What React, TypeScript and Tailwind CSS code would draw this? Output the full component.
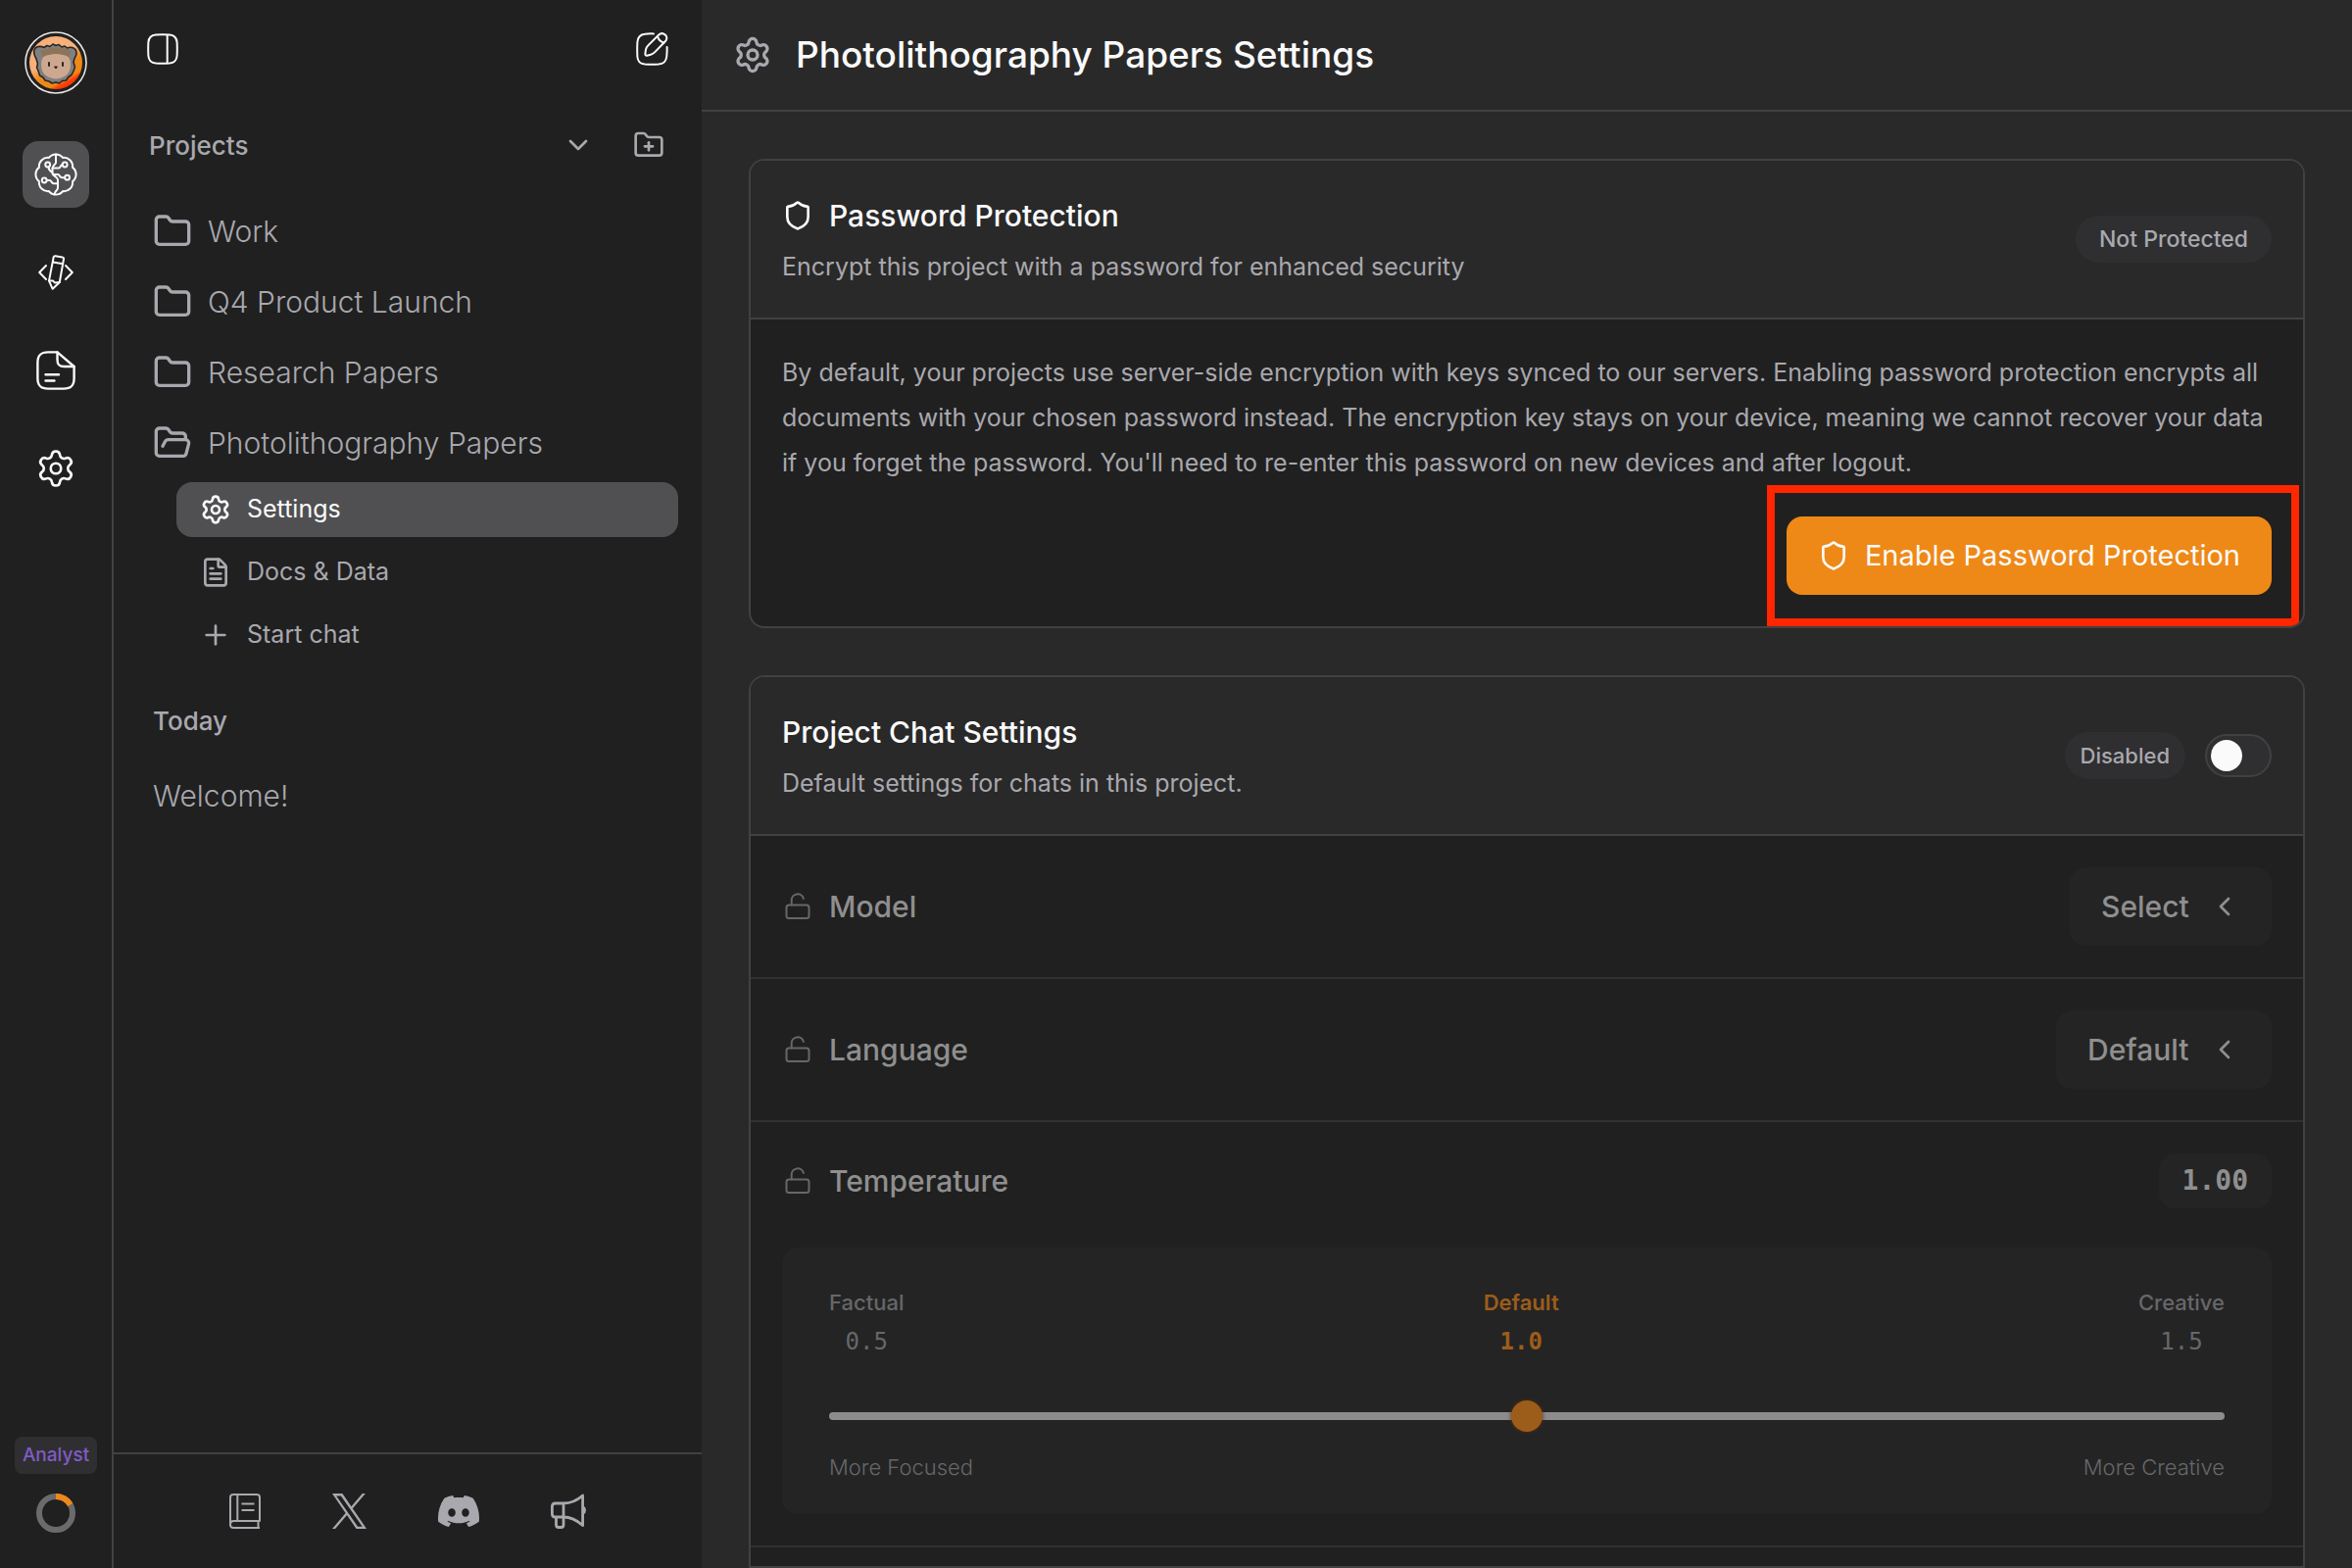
import React from "react";
import {
  ChevronDown,
  ChevronLeft,
  FileText,
  Folder,
  FolderOpen,
  FolderPlus,
  Plus,
  Settings,
  Shield,
} from "lucide-react";
import { SiDiscord } from "react-icons/si";

// Square buttons in the narrow left rail
const railButtonStyle =
  "flex size-[68px] items-center justify-center rounded-[16px] text-[#fafafa]";

// Project rows in the sidebar
const projectLinkStyle =
  "flex h-[72px] items-center gap-4 pl-10 text-[30px] font-light";

// Rows nested below the open project
const subLinkStyle =
  "flex h-14 items-center gap-4 rounded-[16px] pl-6 text-[25px]";

const cardStyle =
  "overflow-hidden border-2 border-[#414141] bg-[#202020]";

const cardHeaderStyle =
  "flex items-center justify-between border-b-2 border-[#414141] bg-[#292929] px-8 py-8";

const badgeStyle =
  "flex h-12 items-center rounded-full bg-[#2f2f31] font-medium text-[#a9a8ae]";

const BrainIcon = () => (
  <svg viewBox="0 0 44 44" className="size-11" fill="none" stroke="currentColor" strokeWidth="2" strokeLinejoin="round" strokeLinecap="round">
    <path d="M14.9 4.9A9 9 0 0 1 29.1 4.9A9 9 0 0 1 39.1 14.9A9 9 0 0 1 39.1 29.1A9 9 0 0 1 29.1 39.1A9 9 0 0 1 14.9 39.1A9 9 0 0 1 4.9 29.1A9 9 0 0 1 4.9 14.9A9 9 0 0 1 14.9 4.9Z" />
    <path d="M22 1.5V10c0 1.6-3.5 2.8-3.5 5.5v5.5c0 2.5 5.5 3.5 5.5 6.5v8c0 3-3.5 3.5-3.5 7" />
    <circle cx="13.7" cy="12" r="2.4" />
    <path d="M14.4 14.4c.4 3 1.6 4.4 4.1 5.6" />
    <circle cx="31.2" cy="12" r="2.4" />
    <path d="M28.6 12c-2 0-1.6 3.4-3.6 3.4h-6.4" />
    <circle cx="33.6" cy="25.2" r="2.4" />
    <path d="M31 25.2h-3c-2 0-2-3.2-4-3.2h-5" />
    <circle cx="10.2" cy="28" r="2.4" />
    <path d="M12.8 28h2.8c2 0 2 3.2 4 3.2H24" />
  </svg>
);

const CodePencilIcon = () => (
  <svg viewBox="0 0 36 36" className="size-9" fill="none" stroke="currentColor" strokeWidth="2" strokeLinejoin="round" strokeLinecap="round">
    <path d="M17.6 1.2l7 1.2q1.7.3 1.4 2L21.8 28 14.7 34.8 11 26.6 15.6 2.8q.3-1.9 2-1.6Z" />
    <path d="M15 7.4l10.2 1.8M11 26.6h4l2 1.8 4.8-.4" />
    <path d="M8 11 1.2 18 8 25M28 11 34.8 18 28 25" />
  </svg>
);

const NoteIcon = () => (
  <svg viewBox="0 0 40 40" className="size-10" fill="none" stroke="currentColor" strokeWidth="2.4" strokeLinejoin="round" strokeLinecap="round">
    <path d="M21.5 1.4H12C4.5 1.4 1.4 4.2 1.4 12v16c0 7.8 3.1 10.6 10.6 10.6h16c7.5 0 10.6-2.8 10.6-10.6V16Z" />
    <path d="M21.5 1.4V9c0 5 1.7 7 7 7h10" />
    <path d="M9.5 24.2H23M9.5 30.5H18.5" />
  </svg>
);

const PanelIcon = () => (
  <svg viewBox="0 0 32 32" className="size-8" fill="none" stroke="currentColor" strokeWidth="2">
    <path d="M9 1.4Q16 1 23 1.4Q30 2 30.6 9Q31 16 30.6 23Q30 30 23 30.6Q16 31 9 30.6Q2 30 1.4 23Q1 16 1.4 9Q2 2 9 1.4Z" />
    <path d="M20.7 1.3v29.4" />
  </svg>
);

const ComposeIcon = () => (
  <svg viewBox="0 0 33 34" className="h-[34px] w-[33px]" fill="none" stroke="currentColor" strokeWidth="2" strokeLinejoin="round" strokeLinecap="round">
    <path d="M18 1.4Q13 1.2 9 1.8Q2 2.5 1.4 10Q1 17.5 1.4 25Q2 32 9 32.6Q16 33 23 32.6Q30.5 32 31.2 25Q31.8 20 31.6 15" />
    <path d="M10 17.5c.4-1.8 1-2.8 2.3-4.1L23 2.8c2.3-2.3 4.8-2 6.8-.2s2.2 4.4 0 6.7L19 20.4c-1.2 1.3-2.3 1.9-4.1 2.4l-3.6.9c-1.3.3-2.1-.5-1.9-1.8Z" />
    <path d="M22 4c.8 3.4 3 5.7 6.6 6.6" />
  </svg>
);

const UnlockIcon = () => (
  <svg viewBox="0 0 32 32" className="size-8 text-[#67676a]" fill="none" stroke="currentColor" strokeWidth="2" strokeLinecap="round">
    <rect x="4.5" y="14.5" width="23" height="13.5" rx="2.5" />
    <path d="M9.7 14.5V9.5a6.2 6.2 0 0 1 12.2-1.5" />
  </svg>
);

const BookIcon = () => (
  <svg viewBox="0 0 32 36" className="h-9 w-8" fill="none" stroke="currentColor" strokeWidth="2" strokeLinejoin="round">
    <path d="M1 32V4q0-3 3-3h24q3 0 3 3v24H4.5Q1 28 1 31.5T4.5 35H31M29.5 28v7M8.3 1v27" />
    <path d="M12.5 10.5h13M12.5 17h13" />
  </svg>
);

const XLogo = () => (
  <svg viewBox="0 0 1200 1227" className="h-9 w-[35px]" fill="currentColor">
    <path d="M714.163 519.284L1160.89 0H1055.03L667.137 450.887L357.328 0H0L468.492 681.821L0 1226.37H105.866L515.491 750.218L842.672 1226.37H1200L714.137 519.284H714.163ZM569.165 687.828L521.697 619.934L144.011 79.694H306.615L611.412 515.685L658.88 583.579L1055.08 1150.3H892.476L569.165 687.854V687.828Z" />
  </svg>
);

const MegaphoneIcon = () => (
  <svg viewBox="0 0 36 36" className="size-9" fill="none" stroke="currentColor" strokeWidth="2.8" strokeLinejoin="round">
    <path d="M13 10H4.5Q1.4 10 1.4 13.3V20.7Q1.4 24 4.5 24H13C21 24 27 27.5 32.6 32.5V2C27 7 21 10 13 10ZM13 10V24" />
    <path d="M5.5 24v8q0 2.5 2.5 2.5h2.5q2.5 0 2.5-2.5V24" />
    <path d="M33.5 12.5q2.5 1.5 2.5 4.5t-2.5 4.5Z" fill="currentColor" strokeWidth="0" />
  </svg>
);

const Avatar = () => (
  <svg viewBox="0 0 64 64" className="size-16">
    <defs>
      <linearGradient id="sunset" x1="0.2" y1="0.1" x2="0.7" y2="1">
        <stop offset="0.4" stopColor="#f7b07a" />
        <stop offset="0.6" stopColor="#ee8917" />
        <stop offset="0.82" stopColor="#ee8917" />
        <stop offset="0.9" stopColor="#ff3a08" />
      </linearGradient>
    </defs>
    <circle cx="32" cy="32" r="31" fill="#202020" stroke="#e8e4e1" strokeWidth="1.6" />
    <circle cx="32" cy="32" r="27" fill="url(#sunset)" />
    <path
      d="M11 17q4-3 9-.5l3-2 3 1 3-2.5 3 1.5 3-1 3 2.5 3-1 2.5 2q5-2 8.500 1.500 2.500 4-1 9l-1 4 1.500 5-1.500 4-2 4-3 2-2.500 3.500-4 .5-3 2.500-3.500-1-4 1-3-2-4-1-2-3-3.500-2-1.500-5-1.500-3 1-4-1.500-5Q8 21 11 17Z"
      fill="#7f8082"
      stroke="#2c2725"
      strokeWidth="1.6"
      strokeLinejoin="round"
    />
    <path d="M16 20q16-7 32 0l-3 6q-13-5-26 0Z" fill="#8d7358" />
    <path d="M17 34q0-10 8-10 7-2 14 0 8 0 8 10 0 13-15 14.5Q17 47 17 34Z" fill="#cda78f" />
    <path d="M25 32v3M39 32v3" stroke="#2c2725" strokeWidth="2" strokeLinecap="round" />
    <path d="M30.5 36h3l-1.5 2Z" fill="#2c2725" stroke="#2c2725" strokeWidth="1" />
  </svg>
);

const UsageRing = () => (
  <svg viewBox="0 0 40 40" className="size-10" fill="none" strokeWidth="6">
    <circle cx="20" cy="20" r="17" stroke="#6b6b6e" />
    <path d="M20 3A17 17 0 0 1 34.7 11.5" stroke="#ee8917" />
  </svg>
);

const projects = ["Work", "Q4 Product Launch", "Research Papers"];

const selectRows = [
  { id: "model", label: "Model", value: "Select" },
  { id: "language", label: "Language", value: "Default" },
];

const Rail = () => (
  <nav
    aria-label="Main"
    className="flex w-[116px] shrink-0 flex-col items-center border-r-2 border-[#414141] pt-8 pb-9"
  >
    <a href="#profile" aria-label="Profile">
      <Avatar />
    </a>
    <div className="mt-12 flex flex-col gap-8">
      <button type="button" aria-label="Assistant" className={`${railButtonStyle} bg-[#505052]`}>
        <BrainIcon />
      </button>
      <button type="button" aria-label="Code editor" className={railButtonStyle}>
        <CodePencilIcon />
      </button>
      <button type="button" aria-label="Documents" className={railButtonStyle}>
        <NoteIcon />
      </button>
      <button type="button" aria-label="Preferences" className={railButtonStyle}>
        <Settings className="size-[42px]" strokeWidth={1.5} />
      </button>
    </div>
    <div className="mt-auto flex flex-col items-center gap-5">
      <span className="flex h-[38px] items-center rounded-lg bg-[#2f2f31] px-2 text-[19px] font-medium text-[#7f5cc4]">
        Analyst
      </span>
      <UsageRing />
    </div>
  </nav>
);

const Sidebar = () => (
  <aside className="flex w-[600px] shrink-0 flex-col text-[#a9a8ae]">
    <div className="flex h-[100px] items-center justify-between px-[34px] text-[#fafafa]">
      <button type="button" aria-label="Toggle sidebar">
        <PanelIcon />
      </button>
      <button type="button" aria-label="New chat">
        <ComposeIcon />
      </button>
    </div>
    <div className="flex h-24 items-center gap-10 pr-[38px] pl-9">
      <h2 className="flex-1 text-[26px] font-medium">Projects</h2>
      <button type="button" aria-label="Collapse projects">
        <ChevronDown className="size-8" />
      </button>
      <button type="button" aria-label="New project">
        <FolderPlus className="size-8" />
      </button>
    </div>

    <nav aria-label="Projects" className="pt-1">
      {projects.map((name) => (
        <a key={name} href="#project" className={projectLinkStyle}>
          <Folder className="size-10" />
          {name}
        </a>
      ))}
      <a href="#photolithography" className={projectLinkStyle}>
        <FolderOpen className="size-10" />
        Photolithography Papers
      </a>
      <div className="mt-1 mr-6 ml-16 flex flex-col gap-2">
        <a href="#settings" className={`${subLinkStyle} bg-[#505052] text-[#fafafa]`}>
          <Settings className="size-8" />
          Settings
        </a>
        <a href="#docs" className={subLinkStyle}>
          <FileText className="size-8" />
          Docs &amp; Data
        </a>
        <a href="#chat" className={subLinkStyle}>
          <Plus className="size-8" />
          Start chat
        </a>
      </div>
    </nav>

    <h2 className="mt-10 pl-10 text-[26px] leading-10 font-medium">Today</h2>
    <a href="#welcome" className="mt-5 flex h-[72px] items-center pl-10 text-[30px] font-light">
      Welcome!
    </a>

    <div className="mt-auto flex h-[118px] items-center justify-center gap-[73px] border-t-2 border-[#414141]">
      <a href="#guide" aria-label="Guide">
        <BookIcon />
      </a>
      <a href="#x" aria-label="X">
        <XLogo />
      </a>
      <a href="#discord" aria-label="Discord">
        <SiDiscord className="size-[42px]" />
      </a>
      <a href="#news" aria-label="Announcements">
        <MegaphoneIcon />
      </a>
    </div>
  </aside>
);

const PasswordCard = () => (
  <section className={`${cardStyle} rounded-[16px]`}>
    <div className={cardHeaderStyle}>
      <div>
        <h2 className="flex items-center gap-4 text-[30px] leading-[48px] font-medium text-[#fafafa]">
          <Shield className="size-8" />
          Password Protection
        </h2>
        <p className="mt-2 text-[25px] leading-10">
          Encrypt this project with a password for enhanced security
        </p>
      </div>
      <span className={`${badgeStyle} px-6 text-[23px]`}>Not Protected</span>
    </div>
    <div className="px-8 pt-[31px] pb-8">
      <p className="text-[25px] leading-[46px]">
        By default, your projects use server-side encryption with keys synced to our servers. Enabling
        password protection encrypts all
        <br />
        documents with your chosen password instead. The encryption key stays on your device, meaning we
        cannot recover your data
        <br />
        if you forget the password. You'll need to re-enter this password on new devices and after logout.
      </p>
      <div className="mt-8 flex justify-end">
        <div className="relative">
          <button
            type="button"
            className="flex h-20 items-center gap-4 rounded-[16px] bg-[#ee8917] px-8 text-[29px] text-[#fafafa]"
          >
            <Shield className="size-8" />
            Enable Password Protection
          </button>
          <div className="pointer-events-none absolute -top-8 -right-7 -bottom-8 -left-5 border-8 border-[#ff2600]" />
        </div>
      </div>
    </div>
  </section>
);

const ChatSettingsCard = () => (
  <section className={`${cardStyle} flex-1 rounded-t-[16px]`}>
    <div className={cardHeaderStyle}>
      <div>
        <h2 className="text-[30px] leading-[48px] font-medium text-[#fafafa]">Project Chat Settings</h2>
        <p className="mt-2 text-[25px] leading-10">Default settings for chats in this project.</p>
      </div>
      <label className="flex items-center gap-5">
        <span className={`${badgeStyle} px-4 text-[22px]`}>Disabled</span>
        <input
          type="checkbox"
          role="switch"
          className="flex h-11 w-[68px] appearance-none items-center rounded-full border-2 border-[#414141] bg-[#2f2f31] px-1 before:size-8 before:rounded-full before:bg-[#fafafa] before:content-['']"
        />
      </label>
    </div>

    {selectRows.map((row) => (
      <div key={row.id} className="flex items-center justify-between border-b-2 border-[#313131] px-8 py-8">
        <label htmlFor={row.id} className="flex items-center gap-4 text-[30px] font-medium text-[#8f8f8f]">
          <UnlockIcon />
          {row.label}
        </label>
        <div className="relative text-[#8f8f8f]">
          <select
            id={row.id}
            disabled
            className="h-20 appearance-none rounded-[16px] bg-[#242424] pr-[84px] pl-8 text-[30px] font-medium opacity-100"
          >
            <option>{row.value}</option>
          </select>
          <ChevronLeft className="pointer-events-none absolute top-6 right-8 size-8" />
        </div>
      </div>
    ))}

    <div className="border-b-2 border-[#313131] px-8 py-8">
      <div className="flex items-center justify-between font-medium text-[#8f8f8f]">
        <label htmlFor="temperature" className="flex items-center gap-4 text-[30px]">
          <UnlockIcon />
          Temperature
        </label>
        <output
          htmlFor="temperature"
          className="flex h-14 items-center rounded-[16px] bg-[#242424] px-6 font-['DejaVu_Sans_Mono',monospace] text-[28px] font-bold"
        >
          1.00
        </output>
      </div>
      <div className="mt-10 rounded-[16px] bg-[#242424] px-12 py-8 text-[#67676a]">
        <div className="flex justify-between text-center text-[22px]">
          <div>
            <div className="leading-[48px] font-medium">Factual</div>
            <div className="font-['DejaVu_Sans_Mono',monospace] text-[24px] leading-8">0.5</div>
          </div>
          <div className="text-[#9c5d1a]">
            <div className="leading-[48px] font-semibold">Default</div>
            <div className="font-['DejaVu_Sans_Mono',monospace] text-[24px] leading-8 font-bold">1.0</div>
          </div>
          <div>
            <div className="leading-[48px] font-medium">Creative</div>
            <div className="font-['DejaVu_Sans_Mono',monospace] text-[24px] leading-8">1.5</div>
          </div>
        </div>
        <input
          id="temperature"
          type="range"
          min="0.5"
          max="1.5"
          step="0.01"
          defaultValue="1"
          disabled
          className="mt-11 block h-8 w-full appearance-none bg-transparent [&::-webkit-slider-runnable-track]:h-2 [&::-webkit-slider-runnable-track]:rounded-full [&::-webkit-slider-runnable-track]:bg-[#8c8c8d] [&::-webkit-slider-thumb]:-mt-3 [&::-webkit-slider-thumb]:size-8 [&::-webkit-slider-thumb]:appearance-none [&::-webkit-slider-thumb]:rounded-full [&::-webkit-slider-thumb]:bg-[#9c5d1a] [&::-webkit-slider-thumb]:shadow-[0_0_4px_#5c2c14]"
        />
        <div className="mt-5 flex justify-between text-[22px] leading-8 font-light">
          <span>More Focused</span>
          <span>More Creative</span>
        </div>
      </div>
    </div>
  </section>
);

const App = () => (
  <div className="flex h-screen overflow-hidden bg-[#202020] font-['Inter',sans-serif] text-[#a9a8ae]">
    <Rail />
    <Sidebar />
    <main className="flex min-w-0 flex-1 flex-col bg-[#292929]">
      <header className="flex h-[114px] shrink-0 items-center gap-6 border-b-2 border-[#414141] px-8">
        <Settings className="size-10" />
        <h1 className="text-[37px] font-medium text-[#fafafa]">Photolithography Papers Settings</h1>
      </header>
      <div className="flex flex-1 flex-col gap-12 px-12 pt-12">
        <PasswordCard />
        <ChatSettingsCard />
      </div>
    </main>
  </div>
);

export default App;
